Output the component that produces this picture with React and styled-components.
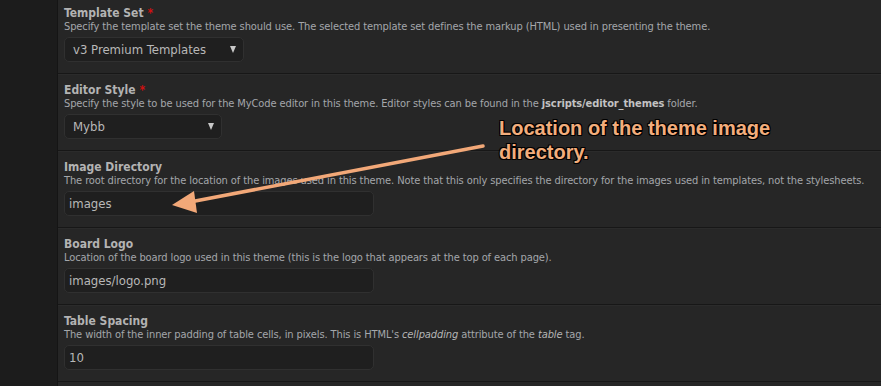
import React from 'react';
import styled, { createGlobalStyle } from 'styled-components';

const Global = createGlobalStyle`
  html, body { margin: 0; padding: 0; background: #262626; }
  body { font-family: Tahoma, "DejaVu Sans Condensed", "DejaVu Sans", sans-serif; font-stretch: condensed; }
`;

const Page = styled.div`
  display: flex;
  width: 881px;
  height: 386px;
  overflow: hidden;
  position: relative;
  background: #262626;
`;

const Sidebar = styled.div`
  width: 57px;
  flex: none;
  background: #1c1c1c;
  border-right: 1px solid #151515;
`;

const Main = styled.div`
  flex: 1;
  margin-top: -3px;
`;

const Row = styled.div`
  height: 77px;
  box-sizing: border-box;
  padding: 8px 6px 0 6px;
  border-bottom: 1px solid #171717;
  border-top: 1px solid #2b2b2b;
`;

const Title = styled.div`
  font-size: 12px;
  line-height: 14px;
  font-weight: bold;
  color: #b3b3b3;
`;

const Req = styled.span`
  color: #d01010;
  margin-left: 4px;
`;

const Desc = styled.div`
  font-size: 11px;
  line-height: 14px;
  letter-spacing: -0.1px;
  color: #a4a7ab;
  margin-bottom: 3px;
  white-space: nowrap;
  b { color: #c2c2c2; }
  i { color: #b5b5b5; }
`;

const Field = styled.div`
  box-sizing: border-box;
  width: ${p => p.w}px;
  height: 25px;
  border: 1px solid #303030;
  border-radius: 5px;
  background: #1f1f1f;
  display: flex;
  align-items: center;
  justify-content: space-between;
  padding: 0 ${p => (p.select ? 7 : 5)}px 0 ${p => (p.select ? 8 : 4)}px;
  font-size: 13px;
  color: #b8b8b8;
`;

const Caret = styled.span`
  width: 0;
  height: 0;
  border-left: 3.5px solid transparent;
  border-right: 3.5px solid transparent;
  border-top: 7px solid #c8c8c8;
`;

const Note = styled.div`
  position: absolute;
  left: 499px;
  top: 116px;
  font-family: "Liberation Sans", Arial, sans-serif;
  font-stretch: normal;
  font-weight: bold;
  font-size: 20px;
  line-height: 24px;
  color: #f2ad7c;
  text-shadow: 1px 1px 0 #000, -1px -1px 0 #000, 1px -1px 0 #000, -1px 1px 0 #000, 1px 0 0 #000, 0 1px 0 #000;
`;

const Arrow = styled.svg`
  position: absolute;
  left: 0;
  top: 0;
  pointer-events: none;
`;

const rows = [
  {
    title: 'Template Set', req: true,
    desc: <>Specify the template set the theme should use. The selected template set defines the markup (HTML) used in presenting the theme.</>,
    value: 'v3 Premium Templates', select: true, w: 180,
  },
  {
    title: 'Editor Style', req: true,
    desc: <>Specify the style to be used for the MyCode editor in this theme. Editor styles can be found in the <b>jscripts/editor_themes</b> folder.</>,
    value: 'Mybb', select: true, w: 158,
  },
  {
    title: 'Image Directory',
    desc: <>The root directory for the location of the images used in this theme. Note that this only specifies the directory for the images used in templates, not the stylesheets.</>,
    value: 'images', w: 310,
  },
  {
    title: 'Board Logo',
    desc: <>Location of the board logo used in this theme (this is the logo that appears at the top of each page).</>,
    value: 'images/logo.png', w: 310,
  },
  {
    title: 'Table Spacing',
    desc: <>The width of the inner padding of table cells, in pixels. This is HTML's <i>cellpadding</i> attribute of the <i>table</i> tag.</>,
    value: '10', w: 310,
  },
];

export default function App() {
  return (
    <Page>
      <Global />
      <Sidebar />
      <Main>
        {rows.map(r => (
          <Row key={r.title}>
            <Title>{r.title}{r.req && <Req>*</Req>}</Title>
            <Desc>{r.desc}</Desc>
            <Field w={r.w} select={r.select ? 1 : 0}>
              <span>{r.value}</span>
              {r.select && <Caret />}
            </Field>
          </Row>
        ))}
      </Main>
      <Note>
        Location of the theme image<br />directory.
      </Note>
      <Arrow width="881" height="386" viewBox="0 0 881 386">
        <line x1="483" y1="146" x2="190" y2="202" stroke="#f2a878" strokeWidth="3.5" strokeLinecap="round" />
        <polygon points="172,205 194,191 197,213" fill="#f2a878" />
      </Arrow>
    </Page>
  );
}
